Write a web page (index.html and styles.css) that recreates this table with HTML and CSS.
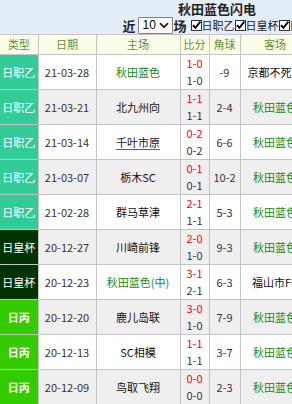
FILE: index.html
```html
<!DOCTYPE html>
<html>
<head>
<meta charset="utf-8">
<link rel="stylesheet" href="styles.css">
</head>
<body>
<div class="page">
  <div class="top">
    <div class="title">秋田蓝色闪电</div>
    <div class="filters">
      <span class="near">近</span>
      <span class="sel">10<svg class="chev" width="10" height="7" viewBox="0 0 10 7"><path d="M1 1.2 L5 5.2 L9 1.2" fill="none" stroke="#222" stroke-width="1.8"/></svg></span>
      <span class="near">场</span>
      <span class="chk"><span class="box"><svg width="11" height="11" viewBox="0 0 11 11"><path d="M2 5.2 L4.4 7.8 L9.4 1.6" fill="none" stroke="#000" stroke-width="1.9"/></svg></span>日职乙</span>
      <span class="chk"><span class="box"><svg width="11" height="11" viewBox="0 0 11 11"><path d="M2 5.2 L4.4 7.8 L9.4 1.6" fill="none" stroke="#000" stroke-width="1.9"/></svg></span>日皇杯</span>
      <span class="chk"><span class="box"><svg width="11" height="11" viewBox="0 0 11 11"><path d="M2 5.2 L4.4 7.8 L9.4 1.6" fill="none" stroke="#000" stroke-width="1.9"/></svg></span>日丙</span>
    </div>
  </div>
  <table class="tbl">
    <colgroup>
      <col class="c-type"><col class="c-date"><col class="c-home"><col class="c-score"><col class="c-corner"><col class="c-away">
    </colgroup>
    <thead>
      <tr><th class="first">类型</th><th>日期</th><th>主场</th><th>比分</th><th>角球</th><th>客场</th></tr>
    </thead>
    <tbody>
      <tr class="odd"><td class="type jz">日职乙</td><td class="date">21-03-28</td><td class="team me">秋田蓝色</td><td class="score"><div class="ft">1-0</div><div class="ht">1-0</div></td><td class="corner">-9</td><td class="team">京都不死鸟</td></tr>
      <tr class="even"><td class="type jz">日职乙</td><td class="date">21-03-21</td><td class="team">北九州向</td><td class="score"><div class="ft">1-1</div><div class="ht">1-1</div></td><td class="corner">2-4</td><td class="team me">秋田蓝色</td></tr>
      <tr class="odd"><td class="type jz">日职乙</td><td class="date">21-03-14</td><td class="team"><span class="ul">千叶市原</span></td><td class="score"><div class="ft">0-2</div><div class="ht">0-2</div></td><td class="corner">6-6</td><td class="team me">秋田蓝色</td></tr>
      <tr class="even"><td class="type jz">日职乙</td><td class="date">21-03-07</td><td class="team">栃木SC</td><td class="score"><div class="ft">0-1</div><div class="ht">0-1</div></td><td class="corner">10-2</td><td class="team me">秋田蓝色</td></tr>
      <tr class="odd"><td class="type jz">日职乙</td><td class="date">21-02-28</td><td class="team">群马草津</td><td class="score"><div class="ft">2-1</div><div class="ht">1-1</div></td><td class="corner">5-3</td><td class="team me">秋田蓝色</td></tr>
      <tr class="even"><td class="type hb">日皇杯</td><td class="date">20-12-27</td><td class="team">川崎前锋</td><td class="score"><div class="ft">2-0</div><div class="ht">1-0</div></td><td class="corner">9-3</td><td class="team me">秋田蓝色</td></tr>
      <tr class="odd"><td class="type hb">日皇杯</td><td class="date">20-12-23</td><td class="team me">秋田蓝色(中)</td><td class="score"><div class="ft">3-1</div><div class="ht">2-1</div></td><td class="corner">6-3</td><td class="team">福山市FC</td></tr>
      <tr class="even"><td class="type jb">日丙</td><td class="date">20-12-20</td><td class="team">鹿儿岛联</td><td class="score"><div class="ft">3-0</div><div class="ht">1-0</div></td><td class="corner">7-9</td><td class="team me">秋田蓝色</td></tr>
      <tr class="odd"><td class="type jb">日丙</td><td class="date">20-12-13</td><td class="team">SC相模</td><td class="score"><div class="ft">1-1</div><div class="ht">1-1</div></td><td class="corner">3-7</td><td class="team me">秋田蓝色</td></tr>
      <tr class="even"><td class="type jb">日丙</td><td class="date">20-12-09</td><td class="team">鸟取飞翔</td><td class="score"><div class="ft">0-0</div><div class="ht">0-0</div></td><td class="corner">2-3</td><td class="team me">秋田蓝色</td></tr>
    </tbody>
  </table>
</div>
</body>
</html>
```

FILE: styles.css
```css
html, body {
  margin: 0;
  padding: 0;
  overflow: hidden;
  background: #fff;
}
body {
  font-family: "Noto Sans CJK SC", "Liberation Sans", sans-serif;
  color: #222;
}
.page {
  width: 434px;
}
.top {
  background: #e4eef9;
  height: 34px;
  text-align: center;
}
.title {
  font-size: 13px;
  font-weight: bold;
  line-height: 16px;
  padding-top: 1px;
  color: #222;
}
.filters {
  display: flex;
  justify-content: center;
  align-items: center;
  height: 17px;
  font-size: 11px;
  line-height: 17px;
}
.near {
  font-size: 13px;
  font-weight: bold;
}
.sel {
  display: inline-flex;
  align-items: center;
  justify-content: space-between;
  box-sizing: border-box;
  width: 35px;
  height: 17px;
  margin: 0 1px 0 2px;
  padding: 0 3px 0 4px;
  background: #fff;
  border: 1px solid #808080;
  border-radius: 1px;
  font-size: 12px;
  font-family: "Liberation Sans", sans-serif;
  color: #000;
}
.chk {
  display: inline-flex;
  align-items: center;
  margin-left: 4px;
  white-space: nowrap;
}
.chk + .chk {
  margin-left: 0;
}
.box {
  display: inline-block;
  width: 11px;
  height: 11px;
  box-sizing: border-box;
  border: 1px solid #333;
  background: #fff;
}
.box svg {
  display: block;
  margin: -1px;
}
.tbl {
  border-collapse: collapse;
  table-layout: fixed;
  width: 310px;
  font-size: 11px;
}
.c-type { width: 38px; }
.c-date { width: 58px; }
.c-home { width: 84px; }
.c-score { width: 29px; }
.c-corner { width: 31px; }
.c-away { width: 70px; }
.tbl th, .tbl td {
  border: 1px solid #c4c4c4;
  padding: 0;
  text-align: center;
  white-space: nowrap;
  overflow: hidden;
}
.tbl th.first, .tbl td.type {
  border-left: none;
}
.tbl th {
  background: #fbfde8;
  color: #5f9038;
  font-weight: normal;
  height: 19px;
  line-height: 19px;
}
.tbl td {
  height: 34px;
  line-height: 17px;
}
.odd td { background: #fff; }
.even td { background: #efefef; }
.tbl td.type { color: #fff; }
.tbl td.jz { background: #33cc99; }
.tbl td.hb { background: #013301; }
.tbl td.jb { background: #33cc00; font-weight: bold; }
.date, .corner, .ht { color: #333; }
.team { color: #111; }
.team.me { color: #138a13; }
.ft { color: #ff0000; }
.ul {
  text-decoration: underline;
  text-decoration-color: #c43a10;
  text-underline-offset: 2px;
}
```
